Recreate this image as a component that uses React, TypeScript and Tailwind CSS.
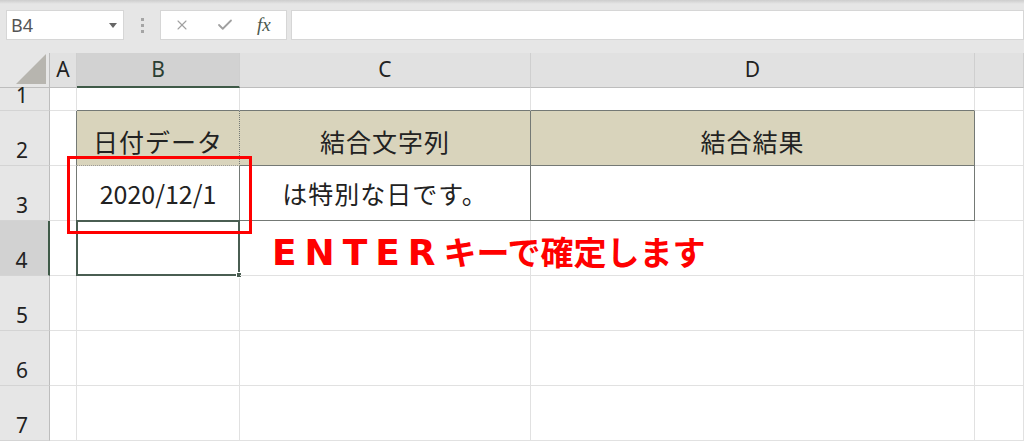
import { X, Check } from "lucide-react";

const jp = { fontFamily: '"Noto Sans CJK JP", "Noto Sans", sans-serif' };
const latin = { fontFamily: '"Noto Sans", "Liberation Sans", sans-serif' };
const wide = { fontFamily: '"DejaVu Sans", "Noto Sans", sans-serif' };

// light grid line colour
const L = "border-[#e1e1e1]";

function RowHead({ n, active }: { n: number; active?: boolean }) {
  return (
    <div
      style={latin}
      className={
        "flex items-end justify-center pr-[5px] pb-[3px] text-[21px] leading-[24px] text-[#222] border-b border-b-[#d4d4d4] " +
        (active
          ? "bg-[#d2d2d2] border-r-2 border-r-[#3f5a48]"
          : "bg-[#e6e6e6] border-r border-r-[#bdbdbd]")
      }
    >
      {n}
    </div>
  );
}

function ColHead({ label, active }: { label: string; active?: boolean }) {
  return (
    <div
      style={latin}
      className={
        "flex items-center justify-center text-[21px] border-r border-r-[#cfcfcf] " +
        (active
          ? "bg-[#d2d2d2] text-[#2b3e33] border-b-2 border-b-[#3f5a48]"
          : "bg-[#e1e1e1] text-[#222] border-b border-b-[#bdbdbd]")
      }
    >
      {label}
    </div>
  );
}

export default function App() {
  return (
    <div className="w-[1024px] h-[441px] overflow-hidden bg-white select-none">
      {/* formula bar */}
      <div className="h-[53px] bg-[#e6e6e6]">
        <div className="h-[4px] bg-gradient-to-b from-[#cdcdcd] to-[#e6e6e6]" />
        <div className="flex h-[30px] mt-[6px] pl-[6px]">
          <div className="w-[118px] h-full bg-white border border-[#d6d6d6] flex items-center justify-between pl-[4px] pr-[6px]">
            <span style={latin} className="text-[18px] text-[#555]">
              B4
            </span>
            <span className="w-0 h-0 border-l-[4px] border-r-[4px] border-t-[5px] border-l-transparent border-r-transparent border-t-[#666]" />
          </div>
          <div className="w-[36px] flex flex-col items-center justify-center gap-[3px]">
            <span className="w-[3px] h-[3px] bg-[#a5a5a5]" />
            <span className="w-[3px] h-[3px] bg-[#a5a5a5]" />
            <span className="w-[3px] h-[3px] bg-[#a5a5a5]" />
          </div>
          <div className="w-[127px] h-full bg-white border border-[#d6d6d6] flex items-center">
            <X className="ml-[13px] w-[16px] h-[16px] text-[#a0a0a0]" strokeWidth={1.6} />
            <Check className="ml-[26px] w-[18px] h-[18px] text-[#a0a0a0]" strokeWidth={2.4} />
            <span
              style={{ fontFamily: '"Liberation Serif", "DejaVu Serif", serif' }}
              className="ml-[23px] italic text-[19px] text-[#4b5a50]"
            >
              fx
            </span>
          </div>
          <div className="flex-1 ml-[4px] h-full bg-white border border-[#d6d6d6]" />
        </div>
      </div>

      {/* sheet */}
      <div className="relative grid grid-cols-[50px_27px_163px_291px_444px_49px] grid-rows-[35px_23px_55px_55px_55px_55px_55px_55px]">
        {/* header row */}
        <div className="bg-[#e6e6e6] border-r border-b border-r-[#bdbdbd] border-b-[#bdbdbd] flex items-end justify-end pr-[3px] pb-[3px]">
          <svg width="30" height="30" viewBox="0 0 30 30">
            <polygon points="30,0 30,30 0,30" fill="#b7b5af" />
          </svg>
        </div>
        <ColHead label="A" />
        <ColHead label="B" active />
        <ColHead label="C" />
        <ColHead label="D" />
        <ColHead label="" />

        {/* row 1 */}
        <RowHead n={1} />
        <div className={"border-r border-b " + L} />
        <div className={"border-r border-b border-b-[#747975] " + L} />
        <div className={"border-r border-b border-b-[#747975] " + L} />
        <div className={"border-r border-b border-b-[#747975] " + L} />
        <div className={"border-r border-b " + L} />

        {/* row 2 */}
        <RowHead n={2} />
        <div className={"border-b border-r border-r-[#747975] " + L} />
        <div
          style={jp}
          className="bg-[#d9d4bc] border-r border-r-[#747975] border-b border-dotted border-b-[#9a9a9a] flex items-end justify-center pb-[9px] text-[25px] leading-[30px] tracking-[1px] text-[#222]"
        >
          日付データ
        </div>
        <div
          style={jp}
          className="bg-[#d9d4bc] border-r border-b border-[#747975] flex items-end justify-center pb-[9px] text-[25px] leading-[30px] tracking-[1px] text-[#222]"
        >
          結合文字列
        </div>
        <div
          style={jp}
          className="bg-[#d9d4bc] border-r border-b border-[#747975] flex items-end justify-center pb-[9px] text-[25px] leading-[30px] tracking-[1px] text-[#222]"
        >
          結合結果
        </div>
        <div className={"border-r border-b " + L} />

        {/* row 3 */}
        <RowHead n={3} />
        <div className={"border-b border-r border-r-[#747975] " + L} />
        <div
          style={jp}
          className="border-r border-b border-[#747975] flex items-end justify-center pb-[12px] text-[25px] leading-[30px] text-[#222]"
        >
          2020/12/1
        </div>
        <div
          style={jp}
          className="border-r border-b border-[#747975] flex items-end justify-center pb-[12px] text-[25px] leading-[30px] tracking-[1px] text-[#222]"
        >
          は特別な日です。
        </div>
        <div className="border-r border-b border-[#747975]" />
        <div className={"border-r border-b " + L} />

        {/* row 4 */}
        <RowHead n={4} active />
        <div className={"border-r border-b " + L} />
        <div className={"relative border-r border-b " + L}>
          <div className="absolute -left-px -top-px -right-px -bottom-px border-2 border-[#4a5e52]" />
          <div className="absolute -right-[3px] -bottom-[3px] w-[6px] h-[6px] bg-[#4a5e52] border border-white" />
        </div>
        <div className={"relative border-r border-b " + L}>
          <div
            style={jp}
            className="absolute left-[32px] top-[12px] whitespace-nowrap font-bold text-[33px] leading-[36px] text-[#ff0000] z-10"
          >
            <span style={wide} className="text-[36px] tracking-[8px]">
              ENTER
            </span>
            <span>キーで確定します</span>
          </div>
        </div>
        <div className={"border-r border-b " + L} />
        <div className={"border-r border-b " + L} />

        {/* rows 5-7 */}
        {[5, 6, 7].map((n) => (
          <div key={n} className="contents">
            <RowHead n={n} />
            <div className={"border-r border-b " + L} />
            <div className={"border-r border-b " + L} />
            <div className={"border-r border-b " + L} />
            <div className={"border-r border-b " + L} />
            <div className={"border-r border-b " + L} />
          </div>
        ))}

        {/* red annotation frame around B3 */}
        <div className="absolute left-[67px] top-[103px] w-[185px] h-[78px] border-[3px] border-[#ff0000]" />
      </div>
    </div>
  );
}
